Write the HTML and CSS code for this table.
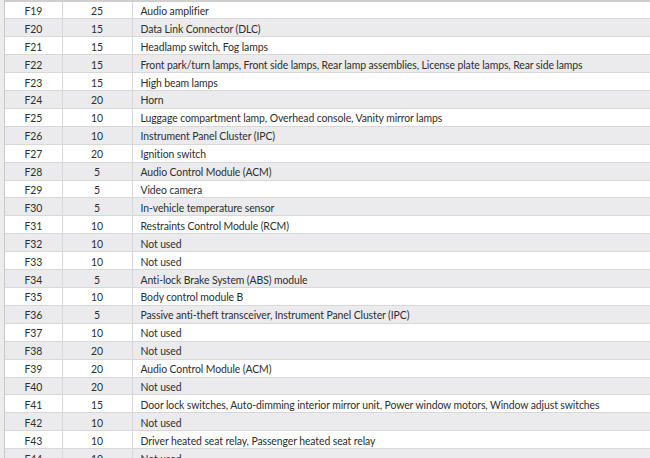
FILE: index.html
```html
<!DOCTYPE html>
<html>
<head>
<meta charset="utf-8">
<link rel="stylesheet" href="styles.css">
</head>
<body>
<div class="page">
<div class="gutter"></div>
<table class="fuses">
<colgroup><col class="c-fuse"><col class="c-amp"><col class="c-desc"></colgroup>
<tbody>
<tr><td>F19</td><td>25</td><td>Audio amplifier</td></tr>
<tr><td>F20</td><td>15</td><td>Data Link Connector (DLC)</td></tr>
<tr><td>F21</td><td>15</td><td>Headlamp switch, Fog lamps</td></tr>
<tr><td>F22</td><td>15</td><td>Front park/turn lamps, Front side lamps, Rear lamp assemblies, License plate lamps, Rear side lamps</td></tr>
<tr><td>F23</td><td>15</td><td>High beam lamps</td></tr>
<tr><td>F24</td><td>20</td><td>Horn</td></tr>
<tr><td>F25</td><td>10</td><td>Luggage compartment lamp, Overhead console, Vanity mirror lamps</td></tr>
<tr><td>F26</td><td>10</td><td>Instrument Panel Cluster (IPC)</td></tr>
<tr><td>F27</td><td>20</td><td>Ignition switch</td></tr>
<tr><td>F28</td><td>5</td><td>Audio Control Module (ACM)</td></tr>
<tr><td>F29</td><td>5</td><td>Video camera</td></tr>
<tr><td>F30</td><td>5</td><td>In-vehicle temperature sensor</td></tr>
<tr><td>F31</td><td>10</td><td>Restraints Control Module (RCM)</td></tr>
<tr><td>F32</td><td>10</td><td>Not used</td></tr>
<tr><td>F33</td><td>10</td><td>Not used</td></tr>
<tr><td>F34</td><td>5</td><td>Anti-lock Brake System (ABS) module</td></tr>
<tr><td>F35</td><td>10</td><td>Body control module B</td></tr>
<tr><td>F36</td><td>5</td><td>Passive anti-theft transceiver, Instrument Panel Cluster (IPC)</td></tr>
<tr><td>F37</td><td>10</td><td>Not used</td></tr>
<tr><td>F38</td><td>20</td><td>Not used</td></tr>
<tr><td>F39</td><td>20</td><td>Audio Control Module (ACM)</td></tr>
<tr><td>F40</td><td>20</td><td>Not used</td></tr>
<tr><td>F41</td><td>15</td><td>Door lock switches, Auto-dimming interior mirror unit, Power window motors, Window adjust switches</td></tr>
<tr><td>F42</td><td>10</td><td>Not used</td></tr>
<tr><td>F43</td><td>10</td><td>Driver heated seat relay, Passenger heated seat relay</td></tr>
<tr><td>F44</td><td>10</td><td>Not used</td></tr>
</tbody>
</table>
</div>
</body>
</html>
```
FILE: styles.css
```css
html, body {
  margin: 0;
  padding: 0;
  background: #ffffff;
  overflow: hidden;
  height: 458px;
}
.page {
  display: flex;
  align-items: flex-start;
}
.gutter {
  width: 5px;
  flex: 0 0 5px;
  height: 458px;
  background: #ececec;
  border-right: 1px solid #c9c9c9;
  box-sizing: border-box;
}
.fuses {
  border-collapse: collapse;
  table-layout: fixed;
  width: 660px;
  font-family: Lato, "Liberation Sans", Arial, sans-serif;
  font-size: 10.45px;
  letter-spacing: -0.1px;
  color: #2e2e2e;
  border-top: 2px solid #cfcfcf;
}
.c-fuse { width: 57px; }
.c-amp { width: 70px; }
.c-desc { width: 533px; }
.fuses td {
  height: 17.92px;
  padding: 2px 0 0 8px;
  border-bottom: 1px solid #d8d8d8;
  border-right: 1px solid #d8d8d8;
  white-space: nowrap;
  line-height: 14px;
  box-sizing: border-box;
}
.fuses td:nth-child(1),
.fuses td:nth-child(2) {
  text-align: center;
  padding: 2px 0 0 0;
}
.fuses tr:nth-child(even) td {
  background: #ebebee;
}
```
